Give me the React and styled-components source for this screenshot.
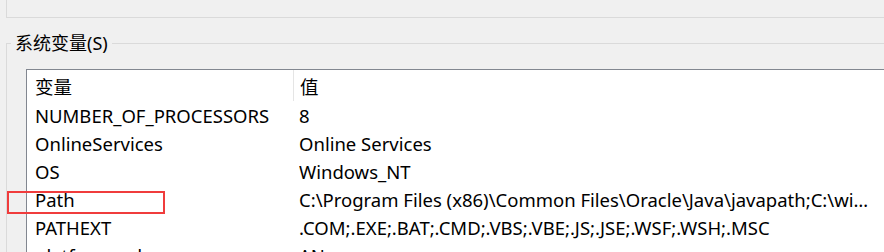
import React from "react";
import styled, { createGlobalStyle } from "styled-components";

const GlobalStyle = createGlobalStyle`
    html, body {
        margin: 0;
        padding: 0;
        background: #f0f0f0;
    }
    body {
        font-family: "Noto Sans", "Noto Sans CJK SC", sans-serif;
        color: #000000;
    }
`;

const Page = styled.div`
    width: 884px;
    height: 252px;
    overflow: hidden;
    position: relative;
    background: #f0f0f0;
`;

const UpperGroup = styled.div`
    margin-left: 6px;
    height: 17px;
    border-left: 1px solid #dadada;
    border-bottom: 1px solid #dadada;
`;

const SystemGroup = styled.fieldset`
    margin: 14px 0 0 6px;
    padding: 0;
    border: none;
    border-top: 1px solid #dadada;
    border-left: 1px solid #dadada;
    height: 300px;
`;

const GroupLabel = styled.legend`
    margin-left: 4px;
    padding: 0 4px;
    font-size: 18px;
    line-height: 22px;
    color: #000;
`;

const ListBox = styled.div`
    margin: 15px 0 0 19px;
    background: #ffffff;
    border-top: 1px solid #828790;
    border-left: 1px solid #828790;
    width: 900px;
`;

const Row = styled.div`
    display: grid;
    grid-template-columns: 266px 1fr;
    height: ${(p) => (p.$header ? "31px" : "28px")};
    align-items: center;
    font-size: 18.5px;
    white-space: nowrap;
`;

const Cell = styled.div`
    padding-left: ${(p) => (p.$second ? "6px" : "8px")};
    height: 100%;
    display: flex;
    align-items: center;
    overflow: hidden;
    border-left: ${(p) => (p.$divider ? "1px solid #e5e5e5" : "none")};
`;

const Value = styled.span`
    display: block;
    max-width: 574px;
    overflow: hidden;
    text-overflow: ellipsis;
`;

const Highlight = styled.div`
    position: absolute;
    left: 7px;
    top: 191px;
    width: 154px;
    height: 19px;
    border: 2px solid #f03c3c;
`;

const variables = [
    ["NUMBER_OF_PROCESSORS", "8"],
    ["OnlineServices", "Online Services"],
    ["OS", "Windows_NT"],
    ["Path", "C:\\Program Files (x86)\\Common Files\\Oracle\\Java\\javapath;C:\\windows\\system32;C:\\windows"],
    ["PATHEXT", ".COM;.EXE;.BAT;.CMD;.VBS;.VBE;.JS;.JSE;.WSF;.WSH;.MSC"],
    ["platformcode", "AN"],
];

const App = () => {
    return (
        <Page>
            <GlobalStyle />
            <UpperGroup />
            <SystemGroup>
                <GroupLabel>系统变量(S)</GroupLabel>
                <ListBox>
                    <Row $header>
                        <Cell>变量</Cell>
                        <Cell $second $divider>值</Cell>
                    </Row>
                    {variables.map(([name, value]) => (
                        <Row key={name}>
                            <Cell>{name}</Cell>
                            <Cell $second><Value>{value}</Value></Cell>
                        </Row>
                    ))}
                </ListBox>
            </SystemGroup>
            <Highlight />
        </Page>
    );
};

export default App;
